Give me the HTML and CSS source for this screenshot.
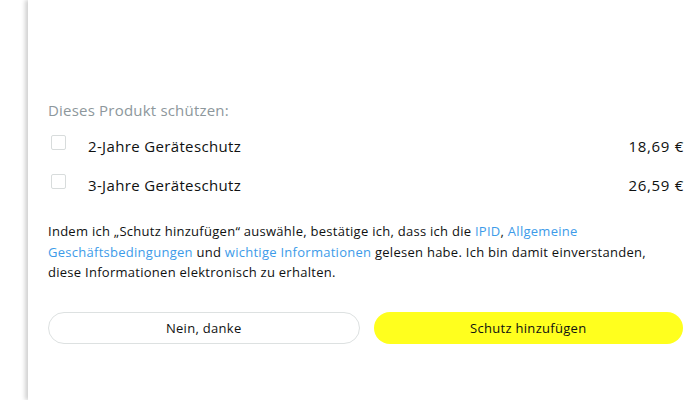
FILE: index.html
```html
<!DOCTYPE html>
<html lang="de">
<head>
    <meta charset="UTF-8">
    <meta name="viewport" content="width=device-width, initial-scale=1.0">
    <title>Geräteschutz</title>
    <link rel="stylesheet" href="styles.css">
</head>
<body>
 <main class="panel">
    <h3 class="title">Dieses Produkt schützen:</h3>

    <label class="plan">
        <span class="check"></span>
        <span class="plan-name">2-Jahre Geräteschutz</span>
        <span class="price">18,69 €</span>
    </label>
    <label class="plan">
        <span class="check"></span>
        <span class="plan-name">3-Jahre Geräteschutz</span>
        <span class="price">26,59 €</span>
    </label>

    <p class="legal">
        Indem ich „Schutz hinzufügen“ auswähle, bestätige ich, dass ich die <a href="#">IPID</a>, <a href="#">Allgemeine Geschäftsbedingungen</a> und <a href="#">wichtige Informationen</a> gelesen habe. Ich bin damit einverstanden, diese Informationen elektronisch zu erhalten.
    </p>

    <div class="actions">
        <button class="btn btn-no">Nein, danke</button>
        <button class="btn btn-add">Schutz hinzufügen</button>
    </div>
 </main>
</body>
</html>
```

FILE: styles.css
```css
*{
    margin: 0;
    padding: 0;
    box-sizing: border-box;
}
body{
    background-color: #fff;
    font-family: "Open Sans", "Noto Sans", sans-serif;
    color: #0f1111;
    overflow: hidden;
}
.panel{
    margin-left: 28px;
    min-height: 100vh;
    padding: 100px 11px 0 20px;
    background-color: #fff;
    box-shadow: -3px 0 4px rgba(0, 0, 0, 0.18);
}
.title{
    font-size: 15px;
    font-weight: 400;
    letter-spacing: 0.2px;
    color: #8d979c;
    line-height: 20px;
}
.plan{
    display: flex;
    align-items: center;
    height: 39px;
    font-size: 15px;
    letter-spacing: 0.35px;
}
.plan:first-of-type{
    margin-top: 6px;
}
.check{
    width: 15px;
    height: 15px;
    margin: -6px 22px 0 3px;
    border: 1px solid #d8dcdc;
    border-radius: 2px;
}
.plan-name{
    flex: 1;
}
.price{
    letter-spacing: 0.7px;
    margin-right: -1px;
}
.legal{
    margin-top: 17px;
    padding-right: 24px;
    font-size: 13px;
    letter-spacing: 0.27px;
    line-height: 20.5px;
}
.legal a{
    color: #3d9be9;
    text-decoration: none;
}
.actions{
    display: flex;
    gap: 14px;
    margin-top: 29px;
}
.btn{
    flex: 1;
    height: 32px;
    border-radius: 16px;
    font-family: inherit;
    font-size: 13px;
    letter-spacing: 0.3px;
    color: #0f1111;
    cursor: pointer;
}
.btn-no{
    background-color: #fff;
    border: 1px solid #dde1e1;
}
.btn-add{
    background-color: #ffff1e;
    border: 0;
}
```
